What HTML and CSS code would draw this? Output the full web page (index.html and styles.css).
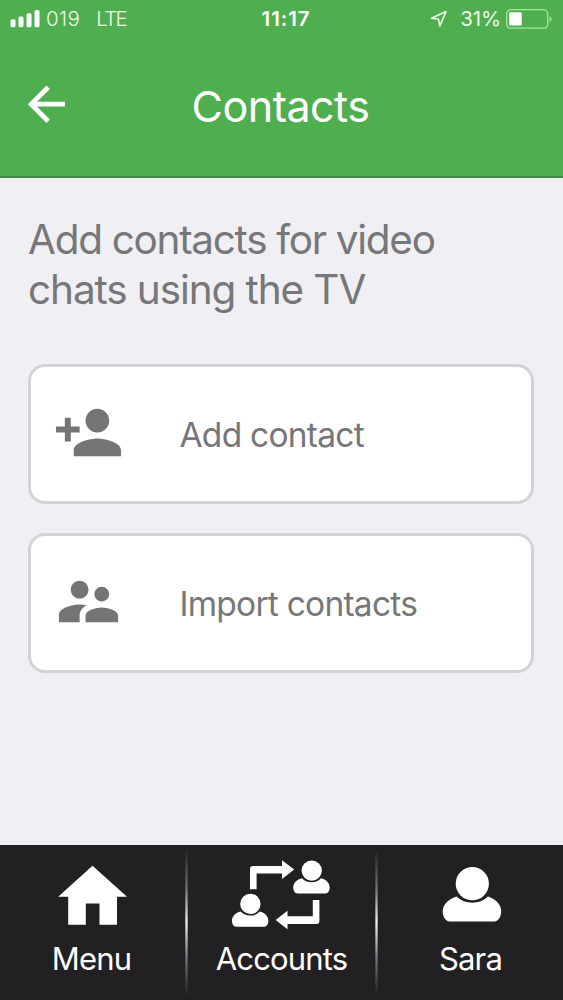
FILE: index.html
```html
<!DOCTYPE html>
<html lang="en">
<head>
<meta charset="utf-8">
<title>Contacts</title>
<link rel="stylesheet" href="styles.css">
</head>
<body>
<div class="app">
  <header class="header">
    <div class="status">
      <div class="status-left">
        <svg class="signal" viewBox="0 0 30 18" fill="#fff"><rect x="0.5" y="9.3" width="5" height="8" rx="1.5"/><rect x="8.5" y="6.5" width="5" height="10.8" rx="1.5"/><rect x="16.5" y="3.2" width="5" height="14.1" rx="1.5"/><rect x="24.5" y="0" width="5" height="17.3" rx="1.5"/></svg>
        <span class="carrier">019</span>
        <span class="network">LTE</span>
      </div>
      <span class="clock">11:17</span>
      <div class="status-right">
        <svg class="location" viewBox="0 0 18 18" fill="none" stroke="#f0fbe8" stroke-width="1.6" stroke-linejoin="round"><path d="M1.5 8.2 16 1.6 9.8 16 8.5 9.2Z"/></svg>
        <span class="percent">31%</span>
        <svg class="battery" viewBox="0 0 47 20"><rect x="0.7" y="0.7" width="41" height="18.4" rx="4" fill="none" stroke="#a5e49c" stroke-width="1.3"/><rect x="3.2" y="3.2" width="12.5" height="13.2" rx="1" fill="#fff"/><path d="M43.6 7v6q2-.8 2-3t-2-3z" fill="#a5e49c"/></svg>
      </div>
    </div>
    <div class="titlebar">
      <svg class="back" viewBox="0 0 40 40" fill="none" stroke="#fff" stroke-width="4.8"><path d="M38 20.2H5M21.2 3.2 4.2 20.2 21.2 37.2"/></svg>
      <h1 class="title">Contacts</h1>
    </div>
  </header>

  <main class="content">
    <p class="intro"><span class="intro-first">Add contacts for video</span><br><span class="intro-second">chats using the TV</span></p>
    <div class="actions">
      <div class="card">
        <svg class="card-icon" viewBox="0 0 24 24"><path d="M15 12c2.21 0 4-1.79 4-4s-1.79-4-4-4-4 1.79-4 4 1.79 4 4 4zm-9-2V7H4v3H1v2h3v3h2v-3h3v-2H6zm9 4c-2.67 0-8 1.34-8 4v2h16v-2c0-2.66-5.33-4-8-4z"/></svg>
        <span class="card-label">Add contact</span>
      </div>
      <div class="card">
        <svg class="card-icon" viewBox="0 0 24 24"><path d="M16.5 12c1.38 0 2.49-1.12 2.49-2.5S17.88 7 16.5 7C15.12 7 14 8.12 14 9.5s1.12 2.5 2.5 2.5zM9 11c1.66 0 2.99-1.34 2.99-3S10.66 5 9 5C7.34 5 6 6.34 6 8s1.34 3 3 3zm7.5 3c-1.83 0-5.5.92-5.5 2.75V19h11v-2.25c0-1.83-3.67-2.75-5.5-2.75zM9 13c-2.33 0-7 1.17-7 3.5V19h7v-2.25c0-.85.33-2.34 2.37-3.47C10.5 13.1 9.66 13 9 13z"/></svg>
        <span class="card-label">Import contacts</span>
      </div>
    </div>
  </main>

  <nav class="nav">
    <div class="tab">
      <svg class="tab-icon" viewBox="0 845 185 90"><path d="M92.5 865.7 127 896.8H117V924.7H99.5V903.5H85.8V924.7H68.2V896.8H58.2Z"/></svg>
      <span class="tab-label menu">Menu</span>
    </div>
    <i class="divider"></i>
    <div class="tab">
      <svg class="tab-icon wide" viewBox="188 845 187 90">
        <path d="M250 889.2V869Q250 866 253 866H282V860.2L294.2 869.6 282 879V873.4H256.6V889.2Z"/>
        <path d="M319.4 900V921Q319.4 924 316.4 924H287.5V929.2L275.6 920 287.5 910.8V916.2H312.8V900Z"/>
        <g id="person-small"><circle cx="311.7" cy="870.6" r="10.2"/><path d="M302 878.2Q305.500 882.3 311.500 882.3T321 878.2C326 879.300 329.700 883 329.700 887.500C329.700 890.500 328 893.500 325.500 893.500H297.500C295 893.500 293.200 890.500 293.200 887.500C293.200 883 297 879.300 302 878.200Z"/></g>
        <use href="#person-small" x="-61.3" y="33.3"/>
      </svg>
      <span class="tab-label">Accounts</span>
    </div>
    <i class="divider"></i>
    <div class="tab">
      <svg class="tab-icon" viewBox="378 845 185 90"><circle cx="472.3" cy="883.7" r="16.6"/><path d="M456.500 896.500Q463 902.700 472.300 902.700T488 896.500C495 898.500 501.200 904 501.200 911.500C501.200 916 498.500 921.500 494.500 921.500H449.500C445.500 921.500 442.700 916 442.700 911.500C442.700 904 449.500 898.500 456.500 896.500Z"/></svg>
      <span class="tab-label">Sara</span>
    </div>
  </nav>
</div>
</body>
</html>
```
FILE: styles.css
```css
* { box-sizing: border-box; margin: 0; padding: 0; }
body { font-family: Inter, "Liberation Sans", sans-serif; background: #f0eff3; }
svg { display: block; flex: none; }
.app { width: 563px; height: 1000px; display: flex; flex-direction: column; overflow: hidden; }

.header { height: 178px; background: #4faf50; border-bottom: 2px solid #478748; color: #fff; }
.status { height: 37px; display: grid; grid-template-columns: 1fr auto 1fr; align-items: center; padding: 0 10px 0 10px; font-size: 20.5px; line-height: 24px; white-space: nowrap; }
.status-left, .status-right { display: flex; align-items: center; color: #eefae8; }
.status-right { justify-content: flex-end; }
.signal { width: 30px; height: 18px; margin-right: 6px; }
.carrier { font-weight: 350; letter-spacing: 0.4px; }
.network { font-weight: 350; margin-left: 16px; letter-spacing: -1.7px; }
.clock { font-weight: 600; font-size: 20.5px; letter-spacing: 0.9px; margin-left: 9px; }
.location { width: 18px; height: 18px; margin-right: 12px; }
.percent { font-weight: 400; letter-spacing: -0.1px; margin-right: 5px; }
.battery { width: 47px; height: 20px; }
.titlebar { height: 139px; display: grid; grid-template-columns: 40px 1fr 40px; align-items: center; padding: 0 28px; }
.back { width: 40px; height: 40px; margin: -5px 0 0 -1px; }
.title { font-size: 43px; font-weight: 400; line-height: 52px; text-align: center; letter-spacing: -0.5px; margin: -2px 2px 0 0; }

.content { flex: 1; padding: 37px 29px 0 28px; color: #777679; }
.intro { font-size: 40.5px; line-height: 50px; white-space: nowrap; }
.intro-first { letter-spacing: -1.3px; }
.intro-second { letter-spacing: -1.1px; }
.actions { display: flex; flex-direction: column; gap: 29px; margin-top: 49px; }
.card { height: 140px; width: 506px; background: #fff; border: 3px solid #d3d2d5; border-radius: 17px; display: flex; align-items: center; padding-left: 22px; }
.card-icon { width: 71px; height: 71px; fill: #747376; margin-top: -3px; }
.card-label { font-size: 33.5px; line-height: 42px; margin: 2px 0 0 55.5px; letter-spacing: -0.75px; white-space: nowrap; }

.nav { height: 155px; background: #222023; display: grid; grid-template-columns: 185px 3px 187px 3px 185px; color: #fff; }
.tab { display: flex; flex-direction: column; align-items: center; }
.tab-icon { width: 185px; height: 90px; fill: #fff; }
.tab-icon.wide { width: 187px; }
.tab-label { font-size: 31px; line-height: 38px; margin-top: 5px; letter-spacing: -0.85px; }
.tab-label.menu { margin-right: 2px; }
.divider { margin: 4px 0; background: linear-gradient(90deg, rgba(34,32,35,.6), transparent 40%, transparent 60%, rgba(34,32,35,.6)), linear-gradient(#222023, #777579 28%, #f4f3f5 50%, #777579 74%, #222023); }
```
